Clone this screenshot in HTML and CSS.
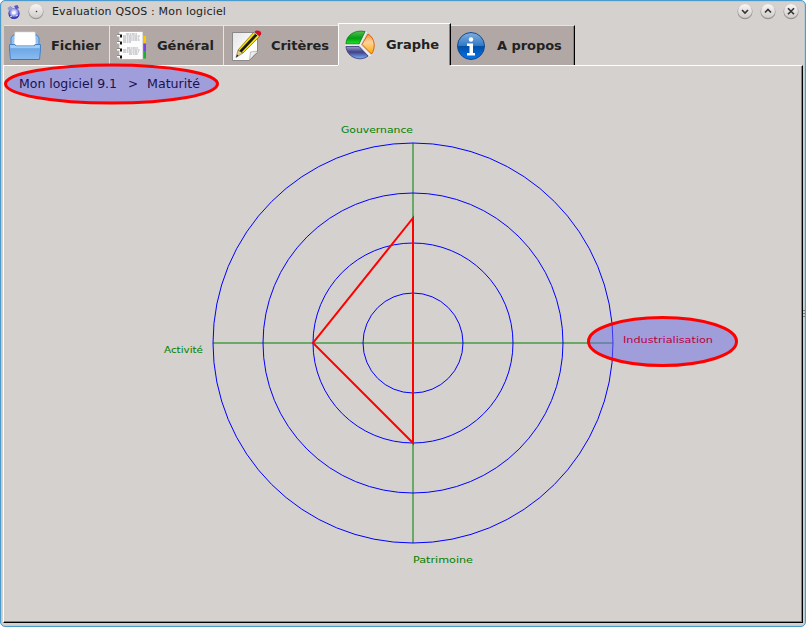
FILE: index.html
```html
<!DOCTYPE html>
<html lang="fr">
<head>
<meta charset="utf-8">
<title>Evaluation QSOS : Mon logiciel</title>
<link rel="stylesheet" href="styles.css">
</head>
<body>
<div class="window">
  <header class="titlebar">
    <svg class="app-icon" width="14" height="16" viewBox="0 0 14 16">
      <defs><radialGradient id="globe" cx=".5" cy=".4"><stop offset="0" stop-color="#fff"/><stop offset=".6" stop-color="#9da3f0"/><stop offset="1" stop-color="#3030b4"/></radialGradient></defs>
      <circle cx="7" cy="9.500" r="5.600" fill="url(#globe)"/>
      <path d="M.5 4l3-2 2 1.500-1 2.500-3 .5z" fill="#9898cf"/><path d="M7 2l3.500-1L12 4l-3 1.500z" fill="#5656bd"/>
      <path d="M5 8l3-1 1 2-2 1.500-2-.5z" fill="#f4f5ff"/><path d="M3 13l2-1M9 12l2-1" stroke="#e4e6ff"/>
    </svg>
    <svg class="menu-button" width="16" height="17" viewBox="0 0 16 17"><circle cx="8" cy="8.800" r="7.500" fill="#9d9995"/><circle cx="8" cy="8" r="7" fill="url(#button)"/><circle cx="8.500" cy="8.500" r=".8" fill="#333"/></svg>
    <h1 class="title">Evaluation QSOS : Mon logiciel</h1>
    <div class="controls">
      <svg width="16" height="17" viewBox="0 0 16 17"><defs><linearGradient id="button" x2="0" y2="1"><stop offset="0" stop-color="#f8f7f7"/><stop offset="1" stop-color="#cfccc9"/></linearGradient></defs><circle cx="8" cy="8.800" r="7.500" fill="#96928e"/><circle cx="8" cy="8" r="7" fill="url(#button)"/><path d="M5 7l3 3 3-3" class="glyph"/></svg>
      <svg width="16" height="17" viewBox="0 0 16 17"><circle cx="8" cy="8.800" r="7.500" fill="#96928e"/><circle cx="8" cy="8" r="7" fill="url(#button)"/><path d="M5 9.500l3-3 3 3" class="glyph"/></svg>
      <svg width="16" height="17" viewBox="0 0 16 17"><circle cx="8" cy="8.800" r="7.500" fill="#96928e"/><circle cx="8" cy="8" r="7" fill="url(#button)"/><path d="M5 5.300l6 6M11 5.300l-6 6" class="glyph"/></svg>
    </div>
  </header>

  <nav class="tabs">
    <div class="tab tab-file">
      <svg width="32" height="32" viewBox="0 0 32 32">
        <defs><linearGradient id="tray" x2="0" y2="1"><stop offset="0" stop-color="#a9cff5"/><stop offset=".3" stop-color="#6da8e6"/><stop offset="1" stop-color="#8bbcf0"/></linearGradient></defs>
        <path d="M2 8l2-3h24l2 3v8H2z" fill="#8fc0f2" stroke="#4a88cc"/>
        <path d="M6 2h20l1 14H5z" fill="#fff" stroke="#d5d8dd" stroke-width=".6"/>
        <path d="M.5 14.500H6l1 1.500h18l1-1.500h5.500V20l-1 9.500h-29L.5 20z" fill="url(#tray)" stroke="#4384c8"/>
        <path d="M1.500 17h29" stroke="#c0ddfa"/><path d="M2 29.500h28" stroke="#3777bd"/>
      </svg><span>Fichier</span>
    </div>
    <div class="tab tab-general">
      <svg width="32" height="32" viewBox="0 0 32 32">
        <path d="M26 6h5v7.500h-5z" fill="#fac800"/><path d="M26 13.500h5V21h-5z" fill="#7643e8"/><path d="M26 21h5v7.500h-5z" fill="#16b330"/>
        <path d="M4 1.500h24v28H4z" fill="#fcfcfc" stroke="#aaa" stroke-width=".7"/>
        <path d="M11 4h11M8 6h17M8 8h16M8 10h17M8 12h8M12 18h11M8 20h17M8 22h16M14 24h9" stroke="#8e8e9b" stroke-width=".8" stroke-dasharray="3 .7 1.500 .5"/>
        <path d="M2 5.500h4M2 12.500h4M2 19.500h4M2 26.500h4" stroke="#fff" stroke-width="2"/>
        <path d="M2 4.500h3M2 11.500h3M2 18.500h3M2 25.500h3" stroke="#888"/>
        <path d="M5 4.500h2v3H5zM5 11.500h2v3H5zM5 18.500h2v3H5zM5 25.500h2v3H5z" fill="#111"/>
      </svg><span>Général</span>
    </div>
    <div class="tab tab-criteria">
      <svg width="32" height="32" viewBox="0 0 32 32">
        <defs><linearGradient id="paper" x2="1" y2="1"><stop offset="0" stop-color="#e5e5e5"/><stop offset=".7" stop-color="#fff"/></linearGradient></defs>
        <path d="M1.500 2.500h25v20l-8 8h-17z" fill="url(#paper)" stroke="#777" stroke-width=".8"/>
        <path d="M18.500 30l1-8 7-1z" fill="#eee" stroke="#999" stroke-width=".6"/>
        <path d="M5 27.500L7 20l5 3z" fill="#e1c98e" stroke="#695a31" stroke-width=".5"/>
        <path d="M7 20L22.500 2.500l6 4L12 23z" fill="#ffe400" stroke="#776900" stroke-width=".7"/>
        <path d="M9.500 21.500L25.500 4.500" stroke="#181818" stroke-width="2.600"/>
        <path d="M23.500 2c2-3 8-1 6.500 2.500l-2 2z" fill="#d50e20"/><path d="M23 2.500l5 4" stroke="#bbb"/><path d="M5 27.500l1-3 1.500 1.200z" fill="#222"/>
      </svg><span>Critères</span>
    </div>
    <div class="tab tab-graph active">
      <svg width="32" height="32" viewBox="0 0 32 32">
        <defs>
          <linearGradient id="green" x2="0" y2="1"><stop offset="0" stop-color="#58bd58"/><stop offset=".55" stop-color="#00a010"/><stop offset="1" stop-color="#22e52b"/></linearGradient>
          <linearGradient id="orange" x2="0" y2="1"><stop offset="0" stop-color="#ff8b35"/><stop offset=".4" stop-color="#ffd49c"/><stop offset="1" stop-color="#ffaa00"/></linearGradient>
          <linearGradient id="violet" x2="0" y2="1"><stop offset="0" stop-color="#9da0cd"/><stop offset=".45" stop-color="#404087"/><stop offset="1" stop-color="#78b3ff"/></linearGradient>
        </defs>
        <path d="M15 15H2C2 6 11 .5 21 2.500z" fill="url(#green)" stroke="#087e13" stroke-width=".8"/>
        <path d="M18 15.500L24 5c7 4 8 14 3.500 20z" fill="url(#orange)" stroke="#d35a00" stroke-width=".9"/>
        <path d="M2 17.500h13l9 9.500C17 33 3 29 2 17.500z" fill="url(#violet)" stroke="#343472" stroke-width=".8"/>
        <path d="M1.500 16.200H16L22.500 3M16 16l10.500 11" fill="none" stroke="#f3f3f3" stroke-width="1.200"/>
      </svg><span>Graphe</span>
    </div>
    <div class="tab tab-about">
      <svg width="32" height="32" viewBox="0 0 32 32">
        <defs><linearGradient id="info" x2="0" y2="1"><stop offset="0" stop-color="#82aedf"/><stop offset=".48" stop-color="#347bc4"/><stop offset=".52" stop-color="#0050a8"/><stop offset="1" stop-color="#0874ee"/></linearGradient></defs>
        <circle cx="16" cy="16" r="13.500" fill="url(#info)" stroke="#124b8e"/>
        <circle cx="16" cy="9.500" r="2.200" fill="#fff"/><path d="M12 13.500h6V23h2v2.500h-8V23h2.500v-7H12z" fill="#fff"/>
      </svg><span>A propos</span>
    </div>
  </nav>

  <main class="panel">
    <svg class="chart" width="797" height="555" viewBox="4 66 797 555">
      <g class="axes"><path d="M413 143v400M213 343h400"/></g>
      <g class="rings"><circle cx="413" cy="343" r="50"/><circle cx="413" cy="343" r="100"/><circle cx="413" cy="343" r="150"/><circle cx="413" cy="343" r="200"/></g>
      <path class="score" d="M413 218L313 343 413 443z"/>
      <g class="labels">
        <text x="341" y="133" textLength="72" lengthAdjust="spacingAndGlyphs">Gouvernance</text>
        <text x="164" y="353" textLength="39" lengthAdjust="spacingAndGlyphs">Activité</text>
        <text x="413" y="563" textLength="60" lengthAdjust="spacingAndGlyphs">Patrimoine</text>
      </g>
      <ellipse class="highlight" cx="662.500" cy="341.500" rx="74" ry="24"/>
      <text class="selected" x="623" y="343" textLength="90" lengthAdjust="spacingAndGlyphs">Industrialisation</text>
      <ellipse class="highlight" cx="111.500" cy="84" rx="106" ry="19"/>
      <g class="breadcrumb"><text x="19" y="88" textLength="98" lengthAdjust="spacingAndGlyphs">Mon logiciel 9.1</text><text x="128" y="88">&gt;</text><text x="147" y="88" textLength="53" lengthAdjust="spacingAndGlyphs">Maturité</text></g>
    </svg>
  </main>
  <div class="grip"></div>
</div>
</body>
</html>
```
FILE: styles.css
```css
* { box-sizing: border-box; }
body { margin: 0; background: #fff; font-family: "DejaVu Sans", sans-serif; }
.window {
  position: relative;
  width: 806px; height: 627px;
  padding: 0 2px 3px 2px;
  border: 1px solid #4c9bcd;
  border-radius: 5px;
  background: #d5d1ce;
  box-shadow: inset 0 0 0 1px #b9cbd7;
  overflow: hidden;
}
.titlebar { display: flex; height: 22px; padding: 2px 4px 0 4px; }
.app-icon { margin-top: 1px; }
.menu-button { margin: 0 0 0 7px; }
.title { margin: 0 0 0 8px; font-size: 11px; font-weight: 400; line-height: 17px; color: #222; letter-spacing: .17px; }
.controls { display: flex; gap: 7px; margin: 0 0 0 auto; }
.glyph { fill: none; stroke: #333; stroke-width: 1.6; }
.tabs { display: flex; align-items: flex-end; height: 42px; padding-left: 1px; }
.tab {
  display: flex; align-items: center;
  height: 40px;
  border-top: 1px solid #e5e2e0;
  border-right: 1px solid #e7e4e2;
  background: #b1a8a5;
  color: #222;
  font-size: 13px; font-weight: 700; letter-spacing: -.05px;
}
.tab svg { flex: none; margin-left: 5px; }
.tab span { margin-left: 10px; white-space: nowrap; }
.tab-file { width: 106px; }
.tab-general { width: 114px; }
.tab-criteria { width: 114px; border-right: 0; }
.tab-criteria svg { margin-left: 7px; }
.tab-criteria span { margin-left: 8px; }
.tab-graph { width: 113px; height: 42px; background: #d5d1ce; border-top-color: #fff; border-left: 1px solid #fff; border-right-color: #000; box-shadow: inset -1px 0 #858280, 0 1px #d5d1ce; position: relative; }
.tab-graph span { margin-left: 10px; }
.tab-about { width: 124px; border-right-color: #000; box-shadow: inset -1px 0 #858280; }
.tab-about svg { margin-left: 4px; }
.panel { width: 800px; height: 558px; border: 1px solid; border-color: #fff #000 #000 #fff; box-shadow: inset -1px -1px #858280; }
.chart { display: block; overflow: visible; position: relative; }
.axes path { fill: none; stroke: #008000; stroke-width: 1; }
.rings circle { fill: none; stroke: #00f; stroke-width: 1; }
.score { fill: none; stroke: #f00; stroke-width: 2; }
.labels { font-size: 9.3px; fill: #008000; }
.selected { font-size: 9.3px; fill: #bb003f; }
.highlight { fill: rgba(107, 105, 231, .5); stroke: #f00; stroke-width: 3; }
.breadcrumb { font-size: 12px; fill: #1b124e; }
.grip { position: absolute; right: 0; top: 309px; width: 2px; height: 7px; background: repeating-linear-gradient(#76818a 0 1px, transparent 1px 3px); }
```
